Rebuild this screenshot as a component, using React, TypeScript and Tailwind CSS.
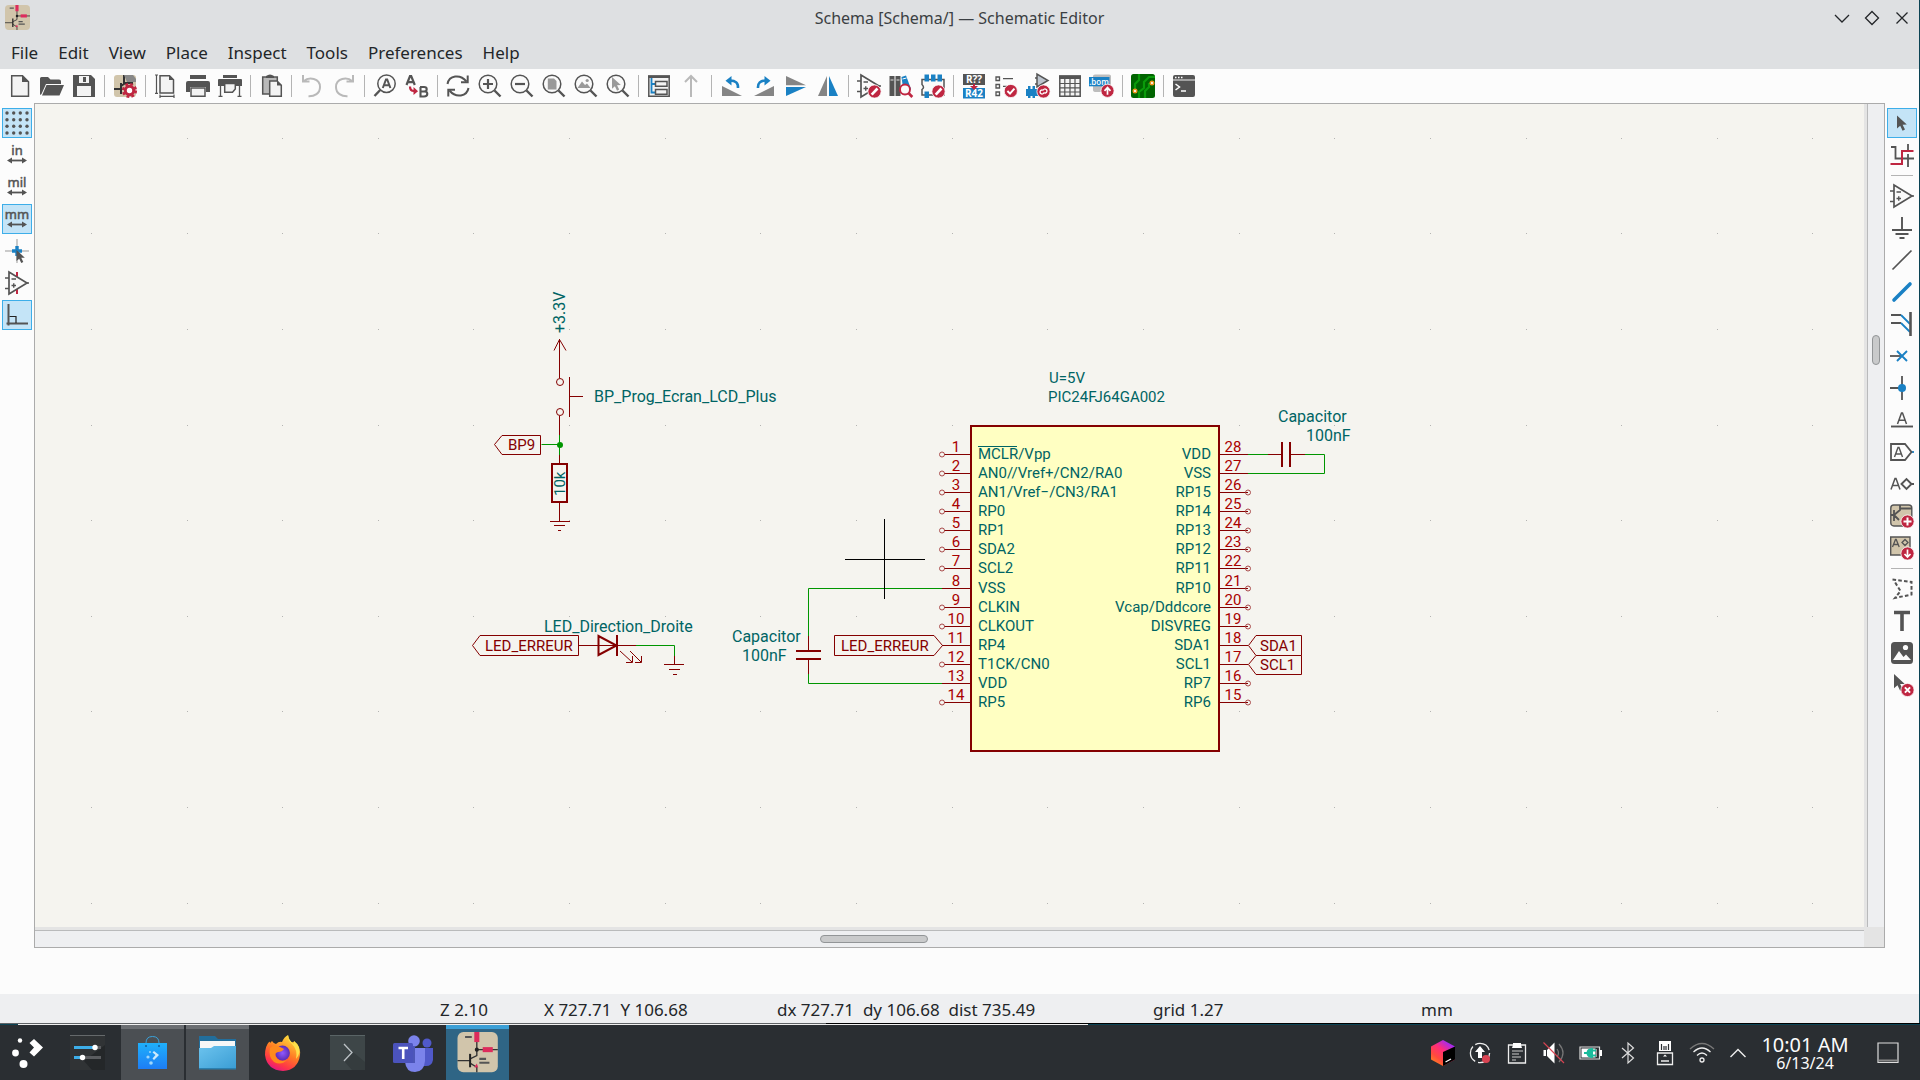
import type { ReactNode } from 'react';

const G = '#545454';
const B = '#1a81c4';
const R = '#bf2641';
const L = '#f3f3f3';

type Tool = { name: string; icon: ReactNode; active?: boolean } | null;

function Svg({ children, className = 'h-6 w-6 overflow-visible' }: { children: ReactNode; className?: string }) {
  return (
    <svg viewBox="0 0 24 24" className={className} fill="none" stroke={G} strokeWidth="1.5" aria-hidden="true">
      {children}
    </svg>
  );
}

function Lens({ children }: { children?: ReactNode }) {
  return (
    <>
      <circle cx="10" cy="10" r="8.8" fill="#fafafa" />
      <path d="M16.5 16.5L22.5 22.5" strokeWidth="2.4" />
      {children}
    </>
  );
}

function Badge({ children, cx = 17.5, cy = 17.5 }: { children: ReactNode; cx?: number; cy?: number }) {
  return (
    <g>
      <circle cx={cx} cy={cy} r="6.6" fill={R} stroke="#fcfcfc" strokeWidth="0.8" />
      <g transform={`translate(${cx} ${cy})`} stroke="#fff" strokeWidth="1.7">
        {children}
      </g>
    </g>
  );
}

const pencil = <path d="M-2.8 3.2L3 -3" strokeWidth="2.6" />;
const arrowCursor = 'M0 0V13L3.2 10.2L5.6 15.2L8 14L5.6 9.2L9.8 9Z';

function KicadMark() {
  return (
    <>
      <rect x="0" y="0" width="24" height="24" rx="3.5" fill="#d1c5ab" stroke="none" />
      <path d="M11.5 0V10.5M11.5 10.5H24M0 17H7.5M11.5 10.5V14L7.5 16M7.5 18.5L11.5 21V24" stroke="#333" strokeWidth="0.8" />
      <path d="M7.5 13V21" stroke="#222" strokeWidth="1.2" />
      <rect x="10" y="0" width="3" height="6" fill="#dd2c5c" stroke="none" />
      <rect x="15" y="9" width="6" height="3" fill="#dd2c5c" stroke="none" />
      <circle cx="11.5" cy="10.5" r="1.2" fill="#222" stroke="none" />
      <path d="M10 21L11.5 18.8L12.3 21.2Z" fill="#dd2c5c" stroke="none" />
      <path d="M4.5 3H8.5M13 16H17M13 18.3H19" stroke="#555" strokeWidth="1.2" />
    </>
  );
}

function OpAmp() {
  return (
    <>
      <path d="M4 1V23L22 12Z" fill="#fafafa" strokeWidth="1.7" />
      <path d="M0 7H4M0 17.5H4M22 12H24" strokeWidth="1.7" />
      <path d="M6.5 8H11M6.5 14.5H11M8.75 12.2V16.8" strokeWidth="1.4" />
    </>
  );
}

const unit = (t: string) => (
  <Svg>
    <text x="12" y="12" textAnchor="middle" fontSize="13" fontFamily="Noto Sans" fill={G} stroke={G} strokeWidth="0.5">{t}</text>
    <path d="M4 17.5H20" strokeWidth="1.8" />
    <path d="M2 17.5L7 14.5V20.5ZM22 17.5L17 14.5V20.5Z" fill={G} stroke="none" />
  </Svg>
);

const topTools: Tool[] = [
  { name: 'New', icon: <Svg><path d="M3.7 1.7H14.5L20.5 7.7V22.3H3.7Z" fill={L} /><path d="M14 1L21 8H14Z" fill={G} stroke="none" /></Svg> },
  { name: 'Open', icon: <Svg><path d="M0 21V4.5Q0 3 1.5 3H8L10.5 5.5H19Q21 5.5 21 7.5V10H6L1.5 20Z M2 21.5L6.5 11H24L19.5 21.5Z" fill={G} stroke="none" /></Svg> },
  { name: 'Save', icon: <Svg><path d="M1 1H19L23 5V23H1Z" fill={G} stroke="none" /><path d="M5 12H19V22H5Z M7 2H17V9H7Z" fill={L} stroke="none" /><path d="M11 3H14V8H11Z" fill={G} stroke="none" /></Svg> },
  null,
  { name: 'Schematic setup', icon: <Svg><rect x="1" y="1" width="22" height="22" rx="3" fill="#d1c5ab" stroke="none" /><path d="M11 1V10L8 12M1 15H8M8 9V20M11 9H20" stroke="#333" strokeWidth="2" /><path d="M11 1H20L23 5V8H14Z" fill="#888" stroke="none" /><circle cx="16.5" cy="16.5" r="4.2" stroke={R} strokeWidth="3" fill="#fff" /><circle cx="16.5" cy="16.5" r="6.4" stroke={R} strokeWidth="2.4" strokeDasharray="2.8 2.225" /></Svg> },
  null,
  { name: 'Page settings', icon: <Svg><path d="M6 1.7H15.5L19.5 5.7V19H6Z" fill={L} /><path d="M15 1L20 6H15Z" fill={G} stroke="none" /><path d="M2.5 1V19.5M1 1H4M1 19.3H4M6 22.3H20M6 20.5V24M20 20.5V24" strokeWidth="1.2" /></Svg> },
  { name: 'Print', icon: <Svg><path d="M4 1H20V5H4Z M2 7H22Q24 7 24 9V18H20V13H4V18H0V9Q0 7 2 7Z" fill={G} stroke="none" /><path d="M5 14H19V22.3H5Z" fill={L} /></Svg> },
  { name: 'Plot', icon: <Svg><path d="M5 1H19V4H5Z M1 5H23Q24 5 24 6V12H0V6Q0 5 1 5Z" fill={G} stroke="none" /><path d="M6.7 9.5H17.3V15L14.5 18.3H6.7Z" fill={L} /><path d="M2.5 12V22M21.5 12V22M0.5 22.3H4.5M19.5 22.3H23.5" strokeWidth="1.3" /></Svg> },
  null,
  { name: 'Paste', icon: <Svg><path d="M3.7 3H18.3V20H3.7Z" fill="#b9b9b9" /><path d="M7 2Q11 -1 15 2V4H7Z" fill={G} stroke="none" /><path d="M10.7 7H18L22.3 11.3V22.3H10.7Z" fill={L} /><path d="M18 6.5L23 11.5H18Z" fill={G} stroke="none" /></Svg> },
  null,
  { name: 'Undo', icon: <Svg><path d="M3 1V7.5H9.5M3.5 7.2C9 2.5 20 4 20 13C20 19.5 14.5 22.5 8.5 22.3" stroke="#b9b9b9" strokeWidth="2" /></Svg> },
  { name: 'Redo', icon: <Svg><path d="M21 1V7.5H14.5M20.5 7.2C15 2.5 4 4 4 13C4 19.5 9.5 22.5 15.5 22.3" stroke="#b9b9b9" strokeWidth="2" /></Svg> },
  null,
  { name: 'Find', icon: <Svg><circle cx="13.5" cy="9.7" r="8.7" fill="#fafafa" /><path d="M7.2 16L1.5 22" strokeWidth="2.4" /><path d="M9.8 14L13 5.5H14.2L17.4 14M11 11.3H16.2" strokeWidth="2" /></Svg> },
  { name: 'Find and replace', icon: <Svg><path d="M1.5 11L5 2H6.2L9.8 11M2.8 8.2H8.5" strokeWidth="2.2" /><path d="M15.5 13V22.5H19Q22.3 22.5 22.3 19.8Q22.3 17.5 19.5 17.5H15.5M19 17.5Q21.7 17.3 21.7 15.2Q21.7 13 19 13H15" strokeWidth="2.1" /><path d="M5 12.5Q5 17 9 17" stroke={R} strokeWidth="2.2" /><path d="M8.5 13L13 17.3L8.5 21Z" fill={R} stroke="none" /></Svg> },
  null,
  { name: 'Refresh', icon: <Svg><path d="M1.5 10C3 1.5 14 -0.5 20.5 7.5M22.5 14C21 22.5 10 24.5 3.5 16.5" strokeWidth="2" /><path d="M21.7 1.5V8.3H15M2.3 22.5V15.7H9" strokeWidth="2" /></Svg> },
  { name: 'Zoom in', icon: <Svg><Lens><path d="M5 10H15M10 5V15" strokeWidth="2.2" /></Lens></Svg> },
  { name: 'Zoom out', icon: <Svg><Lens><path d="M5 10H15" strokeWidth="2.2" /></Lens></Svg> },
  { name: 'Zoom to page', icon: <Svg><Lens><path d="M5.8 4.5H12L14.5 7V15.5H5.8Z" fill="#999" stroke="none" /></Lens></Svg> },
  { name: 'Zoom to objects', icon: <Svg><Lens><path d="M3.5 14L8 7.5L11 11L13 9.5L16.5 14Z" fill="#999" stroke="none" /><circle cx="13.2" cy="6.5" r="1.6" fill="#999" stroke="none" /></Lens></Svg> },
  { name: 'Zoom to selection', icon: <Svg><Lens><path d={arrowCursor} transform="translate(6 3) scale(.9)" fill="#999" stroke="none" /></Lens></Svg> },
  null,
  { name: 'Hierarchy navigator', icon: <Svg><path d="M1.8 2H22.2V22.2H1.8Z" fill={L} /><path d="M1 1.5H23V4H1Z" fill={G} stroke="none" /><path d="M4.5 4V18.5H8M4.5 10H8" stroke={B} strokeWidth="1.8" /><path d="M8.5 7.5H20V12.3H8.5ZM8.5 15.5H20V20.3H8.5Z" /></Svg> },
  { name: 'Up one sheet', icon: <Svg><path d="M12 23V2M6 8L12 2L18 8" stroke="#b9b9b9" strokeWidth="2" /></Svg> },
  null,
  { name: 'Rotate left', icon: <Svg><path d="M2 12V22H22Z" fill="#858585" stroke="none" /><path d="M18 14Q18.5 6.5 10 6.5" stroke={B} strokeWidth="2.6" /><path d="M11.5 2V11.5L5.5 6.7Z" fill={B} stroke="none" /></Svg> },
  { name: 'Rotate right', icon: <Svg><path d="M22 12V22H2Z" fill="#858585" stroke="none" /><path d="M6 14Q5.5 6.5 14 6.5" stroke={B} strokeWidth="2.6" /><path d="M12.5 2V11.5L18.5 6.7Z" fill={B} stroke="none" /></Svg> },
  { name: 'Flip vertical', icon: <Svg><path d="M2 2V11.3H22Z" fill="#858585" stroke="none" /><path d="M2 22V13H22Z" fill={B} stroke="none" /></Svg> },
  { name: 'Flip horizontal', icon: <Svg><path d="M2 22H11V2Z" fill="#858585" stroke="none" /><path d="M22 22H13V2Z" fill={B} stroke="none" /></Svg> },
  null,
  { name: 'Symbol editor', icon: <Svg><OpAmp /><Badge>{pencil}</Badge></Svg> },
  { name: 'Symbol library browser', icon: <Svg><path d="M0.5 2H5.5V22H0.5ZM6.5 2H11.5V22H6.5Z" fill={G} stroke="none" /><path d="M1.5 6H4.5M7.5 6H10.5" stroke="#ddd" strokeWidth="1.2" /><path d="M12.5 3L17 1.5L22 15L15 21Z" fill={B} stroke="none" /><path d="M13.5 5L17.5 4" stroke="#fff" strokeWidth="1" /><circle cx="16" cy="15.5" r="5" fill="#fafafa" stroke={R} strokeWidth="1.9" /><path d="M19.5 19L23.3 23" stroke={R} strokeWidth="2.6" /></Svg> },
  { name: 'Footprint editor', icon: <Svg><path d="M1 5.5H23V21H1V15.5Q4 13.5 1 10.5Z" fill="#fafafa" /><path d="M3.5 0.5H8V7.5H3.5ZM10 0.5H14.5V7.5H10ZM16.5 0.5H21V7.5H16.5ZM3.5 17.5H8V24H3.5Z" fill={B} stroke="none" /><Badge>{pencil}</Badge></Svg> },
  null,
  { name: 'Annotate', icon: <Svg><path d="M1 0H23V11H1Z" fill={G} stroke="none" /><path d="M1 14H23V24.5H1Z" fill={B} stroke="none" /><g fontFamily="Open Sans" fontWeight="700" fontSize="10" fill="#fff" stroke="none" textAnchor="middle"><text x="12" y="9">R??</text><text x="12" y="23">R42</text></g><path d="M12 10V14" stroke={R} strokeWidth="2" /><path d="M8 12H16L12 16Z" fill={R} stroke="none" /></Svg> },
  { name: 'Electrical rules checker', icon: <Svg><path d="M2 3H5.5V6.5H2ZM2 10.5H5.5V14H2ZM2 18H5.5V21.5H2ZM9 4.7H19M9 12.3H13" strokeWidth="1.3" /><Badge cx={16.8} cy={17}><path d="M-3.4 0L-0.8 2.6L3.6 -2.4" strokeWidth="2" /></Badge></Svg> },
  { name: 'Assign footprints', icon: <Svg><path d="M11 0V13L22 6.5Z" fill="#bcc4ce" /><path d="M9 4H11M9 10H11" /><path d="M0 15H16V22H0Z" fill={B} stroke="none" /><path d="M2 12H4.5V24H2ZM6.5 12H9V24H6.5Z" fill={B} stroke="none" /><Badge><path d="M-0.8 -0.8A2 2 0 1 1 1 1M0.8 0.8A2 2 0 1 1 -1 -1" strokeWidth="1.3" transform="rotate(20)" /></Badge></Svg> },
  { name: 'Symbol fields table', icon: <Svg><path d="M1.8 2H22.2V22.2H1.8Z" fill={L} /><path d="M1 1.5H23V5H1Z" fill={G} stroke="none" /><path d="M1.8 9.5H22.2M1.8 13.8H22.2M1.8 18H22.2M6.8 4V22M12 4V22M17 4V22" strokeWidth="1.2" /></Svg> },
  { name: 'Generate bill of materials', icon: <Svg><path d="M3 2Q3 0.5 5 0.5H19Q21 0.5 21 2V18H6Q3 18 3 16Z" fill="#bdbdbd" stroke="none" /><path d="M-1 3H19.5V12.3H-1Z" fill={B} stroke="none" /><text x="9" y="10.5" textAnchor="middle" fontFamily="Open Sans" fontWeight="600" fontSize="8" fill="#fff" stroke="none">.bom</text><Badge cy={16.8}><path d="M0 4V-3M-3 0L0 -3.2L3 0" /></Badge></Svg> },
  null,
  { name: 'Open PCB editor', icon: <Svg><rect x="0" y="0" width="24" height="24" rx="2.5" fill="#006400" stroke="none" /><path d="M8 0V6L4 10V15M14 24V17L18 13V10H21M24 3H18L13 8V14L8 18V24" stroke="#0a9a0a" strokeWidth="2.2" /><circle cx="4" cy="17" r="1.8" fill="#fff" stroke="#f0961e" strokeWidth="1.4" /><circle cx="21" cy="9" r="1.8" fill="#fff" stroke="#f0961e" strokeWidth="1.4" /></Svg> },
  null,
  { name: 'Scripting console', icon: <Svg><path d="M1 3Q1 1 3 1H21Q23 1 23 3V21Q23 23 21 23H3Q1 23 1 21Z" fill={G} stroke="none" /><path d="M1 6H23" stroke="#eee" strokeWidth="1" /><path d="M3 3.5H4.5M6 3.5H7.5M9 3.5H10.5" stroke="#fff" strokeWidth="1.4" /><path d="M3.5 10L7.5 13L3.5 16M9 17H14" stroke="#fff" strokeWidth="1.5" /></Svg> },
];

const leftTools: Tool[] = [
  { name: 'Show grid', active: true, icon: <Svg>{[2, 8.7, 15.3, 22].map((y) => [2, 8.7, 15.3, 22].map((x) => <circle key={`${x}-${y}`} cx={x} cy={y} r="1.7" fill={G} stroke="none" />))}</Svg> },
  { name: 'Inches', icon: unit('in') },
  { name: 'Mils', icon: unit('mil') },
  { name: 'Millimeters', active: true, icon: unit('mm') },
  { name: 'Full-window crosshair', icon: <Svg><path d="M12 0V24M0 12H24" stroke="#999" strokeWidth="1" /><path d="M12 7V17M7 12H17" stroke={B} strokeWidth="3.4" /><path d={arrowCursor} transform="translate(11.5 11) scale(.85)" fill={G} stroke="none" /></Svg> },
  { name: 'Show hidden pins', icon: <Svg><path d="M12 1V23" stroke={R} strokeWidth="1.8" /><OpAmp /><path d="M12 1V5M12 19V23" stroke={R} strokeWidth="1.8" /></Svg> },
  { name: 'Orthogonal lines', active: true, icon: <Svg><path d="M3.5 1V22.5M1.5 20.5H23" strokeWidth="2" /><path d="M4.5 13.5H11V20" stroke="#222" strokeWidth="1.2" /></Svg> },
];

const rightTools: Tool[] = [
  { name: 'Select', active: true, icon: <Svg><path d={arrowCursor} transform="translate(7 4.5)" fill={G} stroke="none" /></Svg> },
  { name: 'Highlight net', icon: <Svg><path d="M1 4H5.5V15.5H11M18 1V7M18 11V24M11 15.5H24" strokeWidth="1.8" /><path d="M0.5 21H12V8H23.5" stroke={R} strokeWidth="2" /></Svg> },
  null,
  { name: 'Place symbol', icon: <Svg><OpAmp /></Svg> },
  { name: 'Place power', icon: <Svg><path d="M12 1V13.5M2 14H22M5.5 18H18.5M9.5 22H14.5" strokeWidth="1.9" /></Svg> },
  { name: 'Place wire', icon: <Svg><path d="M2.5 21.5L21.5 2.5" strokeWidth="1.7" /></Svg> },
  { name: 'Place bus', icon: <Svg><path d="M4 20L20 4" stroke={B} strokeWidth="3.6" strokeLinecap="round" /></Svg> },
  { name: 'Place bus entry', icon: <Svg><path d="M1 3H11M1 11H11" strokeWidth="1.8" /><path d="M11 3L20 12M11 11L20 20" stroke={B} strokeWidth="1.8" /><path d="M20.5 0V24" strokeWidth="2.6" /></Svg> },
  { name: 'Place no-connect', icon: <Svg><path d="M0 12H11" strokeWidth="1.8" /><path d="M7 7L17 17M7 17L17 7" stroke={B} strokeWidth="1.9" /></Svg> },
  { name: 'Place junction', icon: <Svg><path d="M12 0V24M0 12H12" strokeWidth="1.8" /><circle cx="12" cy="12" r="4" fill={B} stroke="none" /></Svg> },
  { name: 'Place net label', icon: <Svg><path d="M7.5 16L11.5 5H12.5L16.5 16M9 12.3H15" strokeWidth="1.5" /><path d="M1 18.5H23" strokeWidth="1.9" /></Svg> },
  { name: 'Place global label', icon: <Svg><path d="M21 12H24" stroke={B} strokeWidth="1.8" /><path d="M1 4H15L21.5 12L15 20H1Z" strokeWidth="1.8" /><path d="M4.5 17L8 7.5H9L12.5 17M6 14H11" strokeWidth="1.4" /></Svg> },
  { name: 'Place hierarchical label', icon: <Svg><path d="M1 17.5L5 6.5H6L10 17.5M2.5 13.5H8.5" strokeWidth="1.5" /><path d="M11.5 12L16.5 7L21.5 12L16.5 17ZM21.5 12H24" strokeWidth="1.9" /></Svg> },
  { name: 'Place sheet', icon: <Svg><rect x="0.8" y="1" width="21" height="21" rx="3" fill="#d1c5ab" strokeWidth="1.4" /><path d="M10 1V6L4 11M10 4.5H22M1 11H4M4 6V17M4 11L9 16" strokeWidth="1.8" /><Badge><path d="M0 -4V4M-4 0H4" strokeWidth="2" /></Badge></Svg> },
  { name: 'Import sheet pin', icon: <Svg><path d="M0.7 1H20V19H0.7Z" fill="#d1c5ab" strokeWidth="1.4" /><path d="M2.5 11L5.5 3.5H6.2L9.2 11M3.5 8.5H8.2M12 6.5L15 3.5L18 6.5L15 9.5Z" strokeWidth="1.3" /><Badge><path d="M0 -4V3M-3 0.5L0 3.5L3 0.5" /></Badge></Svg> },
  null,
  { name: 'Draw lines', icon: <Svg><path d="M2.5 2.5L21.5 5V17.5L5 21L10.5 14L4.5 4.5" strokeWidth="2" strokeDasharray="3.6 2.2" /></Svg> },
  { name: 'Place text', icon: <Svg><path d="M4 3.5H20M12 3.5V22" strokeWidth="3.6" /></Svg> },
  { name: 'Place image', icon: <Svg><rect x="1" y="1" width="22" height="22" rx="3.5" fill={G} stroke="none" /><path d="M3 19L9 10L13.5 16L16 13.5L21 19Z" fill="#fcfcfc" stroke="none" /><circle cx="15.5" cy="6.5" r="2.6" fill="#fcfcfc" stroke="none" /></Svg> },
  { name: 'Delete', icon: <Svg><path d={arrowCursor} transform="translate(4 1) scale(1.1)" fill={G} stroke="none" /><Badge cy={17}><path d="M-2.6 -2.6L2.6 2.6M-2.6 2.6L2.6 -2.6" strokeWidth="2" /></Badge></Svg> },
];

function SideBar({ tools, label }: { tools: Tool[]; label: string }) {
  return (
    <aside aria-label={label} className="flex w-[34px] flex-none flex-col items-center bg-[#fcfcfc] pt-1">
      {tools.map((t, i) =>
        t ? (
          <button
            key={t.name}
            aria-label={t.name}
            className={
              t.active
                ? 'my-px flex h-[30px] w-[30px] flex-none items-center justify-center border border-[#3daee9] bg-[#c4e4f7]'
                : 'my-px flex h-[30px] w-[30px] flex-none items-center justify-center'
            }
          >
            {t.icon}
          </button>
        ) : (
          <div key={i} className="my-1 h-px w-[22px] flex-none bg-[#b4b4b4]" />
        ),
      )}
    </aside>
  );
}

const C = '#840000';
const W = '#009600';
const T = '#006464';

const leftPins = ['MCLR/Vpp', 'AN0//Vref+/CN2/RA0', 'AN1/Vref−/CN3/RA1', 'RP0', 'RP1', 'SDA2', 'SCL2', 'VSS', 'CLKIN', 'CLKOUT', 'RP4', 'T1CK/CN0', 'VDD', 'RP5'];
const rightPins = ['VDD', 'VSS', 'RP15', 'RP14', 'RP13', 'RP12', 'RP11', 'RP10', 'Vcap/Dddcore', 'DISVREG', 'SDA1', 'SCL1', 'RP7', 'RP6'];
const leftWired = [8, 11, 13];
const rightWired = [28, 27, 18, 17];

const pinRow = (i: number) => Math.round(453.7 + i * 19.13);
const range = (n: number) => Array.from({ length: n }, (_, i) => i);

function Schematic() {
  return (
    <svg className="block h-full w-full" role="img" aria-label="Schematic sheet" fontFamily="Roboto, sans-serif" fontSize="15">
      <g transform="translate(-35 -104)" fill="none" strokeWidth="1">
        <g fill="#b4b4b2">
          {range(19).map((c) =>
            range(9).map((r) => <rect key={`${c}-${r}`} x={Math.round(90.9 + c * 95.64)} y={Math.round(137.6 + r * 95.64)} width="1" height="1" />),
          )}
        </g>

        <rect x="971" y="426" width="248" height="325" fill="#ffffc2" stroke={C} strokeWidth="2" />
        {leftPins.map((name, i) => (
          <g key={name}>
            <path d={`M${leftWired.includes(i + 1) ? 942 : 944} ${pinRow(i) + 0.5}H970`} stroke={C} />
            {!leftWired.includes(i + 1) && <circle cx="942" cy={pinRow(i) + 0.5} r="2.5" stroke="#a94a4a" />}
            <text x="956" y={pinRow(i) - 2} textAnchor="middle" fill="#a90000">{i + 1}</text>
            <text x="978" y={pinRow(i) + 5} fill={T}>{name}</text>
          </g>
        ))}
        {rightPins.map((name, i) => (
          <g key={name}>
            <path d={`M1220 ${pinRow(i) + 0.5}H1248`} stroke={C} />
            {!rightWired.includes(28 - i) && <circle cx="1248" cy={pinRow(i) + 0.5} r="2.5" stroke="#a94a4a" />}
            <text x="1233" y={pinRow(i) - 2} textAnchor="middle" fill="#a90000">{28 - i}</text>
            <text x="1211" y={pinRow(i) + 5} textAnchor="end" fill={T}>{name}</text>
          </g>
        ))}
        <path d="M978 446.5H1017" stroke={T} />

        <g stroke={C}>
          <path d="M559.5 339V378M554 350.5L559.5 339.5L566 350.5M569.5 377V417M569.5 396.5H583M559.5 416V435M559.5 455V464M559.5 502V521M550 521.5H570M554 525.5H565M558 530.5H561" />
          <circle cx="560" cy="382" r="3.5" />
          <circle cx="560" cy="412" r="3.5" />
          <rect x="552" y="464" width="15" height="38" strokeWidth="2" />
          <path d="M540.5 435.5H502L494.5 444.5L502 454.5H540.5Z" />
          <path d="M578.5 635.5H480L472.5 645.5L480 655.5H578.5ZM578 645.5H636M674.5 656V664M664 664.5H684M669 669.5H680M673 674.5H677" />
          <path d="M598.5 636V655L616.5 645.5ZM617 635V656" strokeWidth="2" />
          <path d="M620 651L632 662M632.5 656V662.5H626M630 651L641 662M641.5 656V662.5H635" />
          <path d="M942.5 645.5L934 635.5H834.5V655.5H934ZM808.5 636V650M808.5 660V674" />
          <path d="M796 651H821M796 659H821M1282 442V467M1290 442V467" strokeWidth="2" />
          <path d="M1268 454.5H1281M1291 454.5H1305M1248.5 645.5L1256 635.5H1301.5V655.5H1256ZM1248.5 664.5L1256 655.5M1301.5 655.5V674.5H1256L1248.5 664.5" />
        </g>
        <g stroke={W}>
          <path d="M541.5 444.5H560M559.5 435V455M636 645.5H674.5V656M942 588.5H808.5V636M808.5 674V683.5H942M1248 454.5H1268M1305 454.5H1324.5V473.5H1248" />
          <circle cx="560" cy="445" r="3" fill={W} stroke="none" />
        </g>
        <path d="M845 559.5H925M884.5 519V599" stroke="#000" />

        <g fill={T}>
          <text x="1049" y="383">U=5V</text>
          <text x="1048" y="402">PIC24FJ64GA002</text>
          <g fontSize="16">
            <text x="1278" y="422">Capacitor</text>
            <text x="1306" y="441">100nF</text>
            <text x="594" y="402">BP_Prog_Ecran_LCD_Plus</text>
            <text x="544" y="632">LED_Direction_Droite</text>
            <text x="732" y="642">Capacitor</text>
            <text x="742" y="661">100nF</text>
            <text transform="translate(565 333) rotate(-90)">+3.3V</text>
          </g>
          <text transform="translate(565 496) rotate(-90)">10k</text>
        </g>
        <g fill={C}>
          <text x="508" y="450">BP9</text>
          <text x="485" y="651">LED_ERREUR</text>
          <text x="841" y="651">LED_ERREUR</text>
          <text x="1260" y="651">SDA1</text>
          <text x="1260" y="670">SCL1</text>
        </g>
      </g>
    </svg>
  );
}

const tasks = [
  {
    name: 'System settings', state: 'idle',
    icon: <g stroke="none"><path d="M0 0H35V35H0Z" fill="#303335" /><path d="M0 0H35V1H0Z" fill="#65696b" /><path d="M14 26L35 10V35H22Z" fill="#242729" /><path d="M4 11H31V14H4ZM4 21H31V24H4Z" fill="#5b5d60" /><path d="M4 11H24V14H4ZM4 21H12V24H4Z" fill="#3daee9" /><circle cx="25" cy="12.5" r="2.7" fill="#fff" /><circle cx="12.5" cy="22.5" r="2.7" fill="#fff" /></g>,
  },
  {
    name: 'Discover', state: 'open',
    icon: <g stroke="none"><path d="M11 12V8Q11 1.5 17.5 1.5T24 8V12" stroke="#3aa3dc" fill="none" /><path d="M3 8H32V34H3Z" fill="url(#bag)" /><path d="M19 16L24 20L19 25L17.5 23.5L20.5 20L17.5 17.5Z" fill="#cdeafc" /><circle cx="13" cy="22" r="1.6" fill="#9fd6fa" /><circle cx="16" cy="28" r="1.8" fill="#9fd6fa" /><circle cx="15" cy="17" r="1" fill="#9fd6fa" /><circle cx="11" cy="11" r="1" fill="#155d9c" /><circle cx="24" cy="11" r="1" fill="#155d9c" /></g>,
  },
  {
    name: 'Files', state: 'open',
    icon: <g stroke="none"><path d="M-1 1H15L18 4H36V14H-1Z" fill="#226e9c" /><path d="M0 6H35V16H0Z" fill="#f7f7f7" /><path d="M-1 13H11L14 11H36V34H-1Z" fill="url(#folder)" /><path d="M-1 33H36V34.5H-1Z" fill="#2b80b0" /></g>,
  },
  {
    name: 'Firefox', state: 'idle',
    icon: <g stroke="none"><path d="M7 6Q9 9 11 9Q14 6 17 7Q19 2 23 0Q23 4 26 7Q29 8 29 6Q36 13 35 20Q33 35 18 36Q2 35 0 20Q0 11 4 7Q5 6 5 8Z" fill="url(#fire)" /><path d="M23 0Q22 5 27 9Q33 15 31 24Q36 18 34 12Q32 8 29 6L29 9Q24 6 23 0Z" fill="#ffe04a" /><circle cx="17.5" cy="18" r="7.4" fill="url(#globe)" /><path d="M5 13Q9 9 15 12L19 14Q17 17 13 17Q9 18 11 22Q15 28 22 25Q16 31 9 27Q3 22 5 13Z" fill="#ff8a1d" /></g>,
  },
  {
    name: 'Terminal', state: 'idle',
    icon: <g stroke="none"><path d="M0 0H35V35H0Z" fill="#3e4648" /><path d="M0 0H35V1H0Z" fill="#5a6466" /><path d="M14 26L23 17L35 27V35H22Z" fill="#353c3e" /><path d="M14 9L22 17.5L14 26" fill="none" stroke="#bdc3c7" strokeWidth="1.3" /></g>,
  },
  {
    name: 'Teams', state: 'idle',
    icon: <g stroke="none"><circle cx="32" cy="8" r="4.5" fill="#5059c9" /><path d="M26 13H38V25Q37 31 31 31H26Z" fill="#5059c9" /><circle cx="19" cy="6" r="5.8" fill="#7b83eb" /><path d="M12 13H30V26Q29 37 20 37T10 27Z" fill="#7b83eb" /><path d="M9 11H20V28H11Z" fill="#4d56b8" /><rect x="-2" y="8" width="20" height="20" rx="1.5" fill="#4b53bc" /><path d="M3.5 13H13M8.2 13V24" stroke="#fff" strokeWidth="2.6" /></g>,
  },
  { name: 'Schematic editor', state: 'current', icon: <g transform="translate(-2.5 -3) scale(1.68)"><KicadMark /></g> },
];

const taskClass: Record<string, string> = {
  idle: 'flex h-full w-[63px] items-center justify-center border-t-4 border-transparent pb-1',
  open: 'flex h-full w-[63px] items-center justify-center border-t-4 border-[#6b6e72] bg-[#4b4f53] pb-1',
  current: 'flex h-full w-[63px] items-center justify-center border-t-4 border-[#3b9fd6] bg-[#2f6585] pb-1',
};

const tray = [
  { name: 'Toolbox', icon: <g stroke="none"><path d="M12 -1L24 5.5V18.5L12 25L0 18.5V5.5Z" fill="url(#cube)" /><path d="M12 11L24 5.5V18.5L12 25Z" fill="#000" /><path d="M14.5 21L20 18" stroke="#fff" strokeWidth="1.3" /></g> },
  { name: 'Updates', icon: <><circle cx="12" cy="12" r="9.6" stroke="#eee" strokeWidth="1.3" strokeDasharray="17 3" /><path d="M12 5L17 11H14V17H10V11H7Z" fill="#fff" stroke="none" /><circle cx="18" cy="18" r="4" fill="#da4453" stroke="none" /></> },
  { name: 'Clipboard', icon: <><path d="M3.5 4H20.5V22H3.5Z" stroke="#eee" strokeWidth="1.3" /><path d="M8 4V2H16V4L17 7H7Z" fill="#fff" stroke="none" /><path d="M7 10H18M7 13H14M7 16H16M7 19H11" stroke="#ccc" strokeWidth="1" /></> },
  { name: 'Volume muted', icon: <><path d="M1.5 9H4V15H1.5ZM5 9L12.5 1.5V22.5L5 15Z" fill="#fff" stroke="none" /><path d="M15 8Q18 12 15 16M17 3Q25 12 17 21" stroke="#777" strokeWidth="1.2" /><path d="M1.5 1.5L22 22" stroke="#da4453" strokeWidth="1.1" /></> },
  { name: 'Battery charging', icon: <><path d="M1 6H20.5V18H1Z" stroke="#ddd" strokeWidth="1.2" /><path d="M2.5 7.5H16.5V16.5H2.5ZM21 9H23V15H21Z" fill="#fff" stroke="none" /><path d="M17 8V16" stroke="#999" strokeWidth="2" /><path d="M5 12H9M17 9.5H12M17 14.5H12" stroke="#1abc9c" strokeWidth="2" /><path d="M14 7Q7.5 7 7.5 12T14 17Z" fill="#1abc9c" stroke="none" /></> },
  { name: 'Bluetooth', icon: <path d="M6 7L17.5 17L12 22V2L17.5 7L6 17" stroke="#ddd" strokeWidth="1.2" /> },
  { name: 'Removable devices', icon: <><path d="M6 0H18V10H6Z" fill="#fff" stroke="none" /><path d="M8.5 3V9M11 5V9M13 5V9M15.5 3V9" stroke="#2a2e32" strokeWidth="1.2" /><path d="M4.5 12H19.5V23.5H4.5ZM8 20H16" stroke="#eee" strokeWidth="1.3" /><path d="M10 15.5L12 13.5L14 15.5Z" fill="#fff" stroke="none" /></> },
  { name: 'Network', icon: <g stroke="#eee" strokeWidth="1.3"><path d="M0 8Q12 -3 24 8" stroke="#777" /><path d="M3.5 11Q12 3 20.5 11M7 14.5Q12 9.5 17 14.5" /><circle cx="12" cy="19" r="2" /></g> },
];

const windowButtons = [
  { name: 'Minimize', d: 'M5 9L12 16L19 9' },
  { name: 'Maximize', d: 'M12 5.5L18.5 12L12 18.5L5.5 12Z' },
  { name: 'Close', d: 'M6.5 6.5L17.5 17.5M17.5 6.5L6.5 17.5' },
];

export default function App() {
  return (
    <div className="flex min-h-screen w-full flex-col overflow-hidden bg-[#fcfcfc] font-['Noto_Sans',sans-serif] text-base text-[#232629]">
      <div className="flex flex-1 flex-col border-r border-[#0b4354]">
        <header className="grid h-[37px] grid-cols-[1fr_auto_1fr] items-center bg-[#dee0e2] pb-0.5">
          <svg viewBox="0 0 24 24" className="ml-[5px] h-[25px] w-[25px]" fill="none" aria-hidden="true">
            <KicadMark />
          </svg>
          <h1 className="leading-6 text-[#3b3f43]">Schema [Schema/] — Schematic Editor</h1>
          <div className="flex justify-end gap-1.5 pr-[5px]">
            {windowButtons.map((b) => (
              <button key={b.name} aria-label={b.name}>
                <svg viewBox="0 0 24 24" className="h-6 w-6" fill="none" stroke="#232629" strokeWidth="1.3"><path d={b.d} /></svg>
              </button>
            ))}
          </div>
        </header>
        <nav className="flex h-8 items-center bg-[#dee0e2] pl-px text-[17px]">
          {['File', 'Edit', 'View', 'Place', 'Inspect', 'Tools', 'Preferences', 'Help'].map((m) => (
            <button key={m} className="px-2.5 leading-6">{m}</button>
          ))}
        </nav>
        <div role="toolbar" aria-label="Main toolbar" className="flex h-[34px] items-center pl-1">
          {topTools.map((t, i) =>
            t ? (
              <button key={t.name} aria-label={t.name} className="flex h-8 w-8 flex-none items-center justify-center">{t.icon}</button>
            ) : (
              <div key={i} className="mx-1 h-[22px] w-px flex-none bg-[#b4b4b4]" />
            ),
          )}
        </div>

        <div className="flex flex-1">
          <SideBar tools={leftTools} label="Options" />
          <main className="grid min-w-0 flex-1 grid-cols-[1fr_20px] grid-rows-[1fr_20px] border border-[#ababab] bg-[#e4e4e4]">
            <div className="overflow-hidden bg-[#f5f4ef]">
              <Schematic />
            </div>
            <div className="ml-[3px] flex justify-center border-l border-[#b9babb] bg-[#eeeff1] pt-[231px]">
              <div className="h-[30px] w-2 rounded-full border border-[#929597] bg-[#c9cacb]" />
            </div>
            <div className="mt-[3px] flex items-center border-t border-[#b9babb] bg-[#eeeff1] pl-[785px]">
              <div className="h-2 w-[108px] rounded-full border border-[#929597] bg-[#c9cacb]" />
            </div>
          </main>
          <SideBar tools={rightTools} label="Drawing tools" />
        </div>

        <div className="h-[46px]" />
        <footer className="flex h-[29px] items-center whitespace-pre bg-[#eeeff1] pl-[440px] pt-0.5 text-[17px] leading-6">
          <span className="w-[104px]">Z 2.10</span>
          <span className="w-[233px]">X 727.71  Y 106.68</span>
          <span className="w-[376px]">dx 727.71  dy 106.68  dist 735.49</span>
          <span className="w-[268px]">grid 1.27</span>
          <span>mm</span>
        </footer>
      </div>
      <div className="flex h-px">
        <div className="w-[43%] bg-[#606366]" />
        <div className="flex-1 bg-black" />
      </div>
      <div className="flex h-px">
        <div className="w-[18px] bg-[#0b4354]" />
        <div className="w-[1070px] bg-[#f0f0f0]" />
        <div className="flex-1 bg-[#0b4354]" />
      </div>

      <div className="flex h-[55px] items-center bg-[#2a2e32] text-[#fcfcfc]">
        <svg className="h-0 w-0" aria-hidden="true">
          <defs>
            <linearGradient id="bag" x1="0" y1="0" x2="0" y2="1"><stop offset="0" stopColor="#1fb0fb" /><stop offset="1" stopColor="#1d7df5" /></linearGradient>
            <linearGradient id="folder" x1="0" y1="0" x2="1" y2="1"><stop offset="0" stopColor="#6cc3ee" /><stop offset="1" stopColor="#3a9dd4" /></linearGradient>
            <linearGradient id="fire" x1="0.8" y1="0" x2="0.3" y2="1"><stop offset="0.1" stopColor="#ffd43a" /><stop offset="0.5" stopColor="#ff7a24" /><stop offset="0.8" stopColor="#ff3647" /><stop offset="1" stopColor="#e31587" /></linearGradient>
            <radialGradient id="globe"><stop offset="0" stopColor="#9059ff" /><stop offset="1" stopColor="#5b2db5" /></radialGradient>
            <linearGradient id="cube" x1="0.8" y1="0" x2="0.1" y2="1"><stop offset="0.1" stopColor="#a32bf0" /><stop offset="0.4" stopColor="#ff2d7a" /><stop offset="0.7" stopColor="#ff4a3d" /><stop offset="1" stopColor="#ff9419" /></linearGradient>
          </defs>
        </svg>
        <button aria-label="Application launcher" className="flex h-full w-14 items-center pb-0.5 pl-[11px]">
          <svg viewBox="0 0 32 32" className="h-8 w-8" fill="#fff">
            <path d="M23 3L32 11.5L23 20.5L18.5 16.5L23 11.5L18.5 7Z" />
            <circle cx="9" cy="4.5" r="2.2" /><circle cx="4.5" cy="17" r="3.4" /><circle cx="12.5" cy="28" r="4" />
          </svg>
        </button>
        <div className="flex h-full gap-0.5">
          {tasks.map((t) => (
            <button key={t.name} aria-label={t.name} className={taskClass[t.state]}>
              <svg viewBox="0 0 35 35" className="h-[35px] w-[35px] overflow-visible" fill="none">{t.icon}</svg>
            </button>
          ))}
        </div>
        <div className="ml-auto flex items-center">
          {tray.map((t) => (
            <button key={t.name} aria-label={t.name} className="flex w-[37px] justify-center">
              <svg viewBox="0 0 24 24" className="h-6 w-6 overflow-visible" fill="none">{t.icon}</svg>
            </button>
          ))}
          <button aria-label="Show hidden icons" className="flex w-9 justify-center">
            <svg viewBox="0 0 24 24" className="h-6 w-6" fill="none" stroke="#eee" strokeWidth="1.4"><path d="M4.5 16L12 8.5L19.5 16" /></svg>
          </button>
          <div className="flex w-[98px] flex-col items-center whitespace-nowrap">
            <span className="text-xl leading-5">10:01 AM</span>
            <span className="text-base leading-4">6/13/24</span>
          </div>
          <button aria-label="Show desktop" className="ml-[22px] mr-5">
            <svg viewBox="0 0 24 24" className="h-6 w-6" fill="none"><path d="M2 2H22V21.5H2Z" stroke="#ddd" strokeWidth="1.2" /><path d="M3 18.5H21V20.5H3Z" fill="#888" /></svg>
          </button>
        </div>
      </div>
    </div>
  );
}
